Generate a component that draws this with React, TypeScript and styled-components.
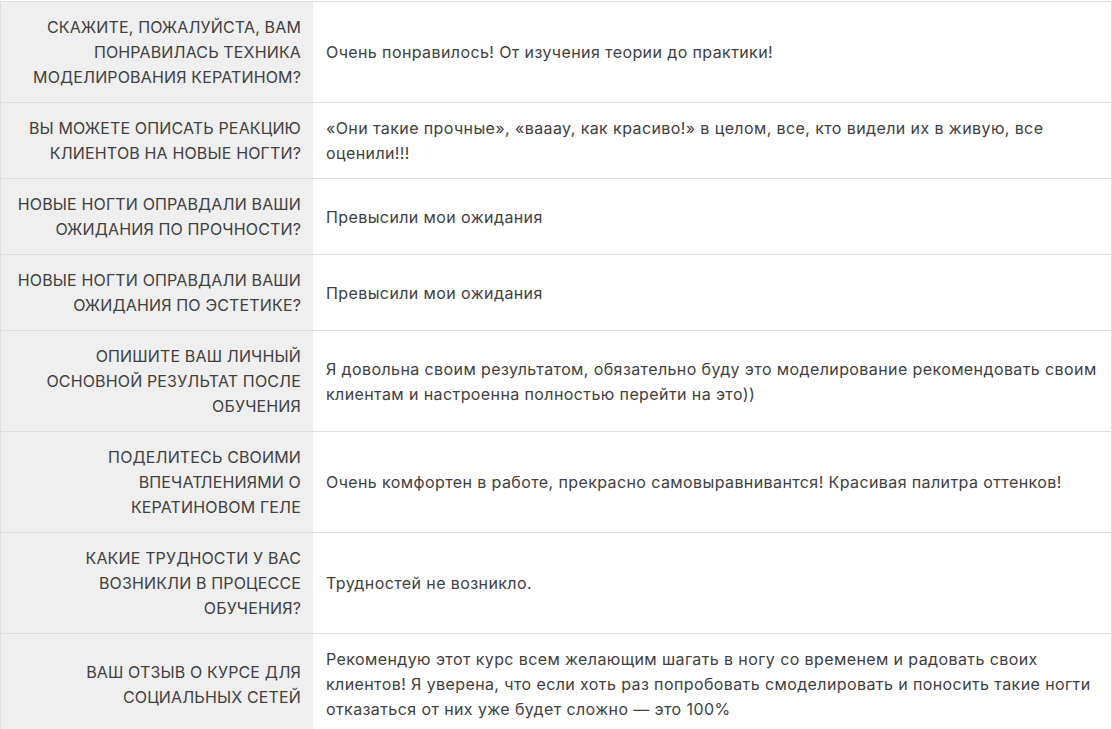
import styled, { createGlobalStyle } from "styled-components";

const GlobalStyle = createGlobalStyle`
  body {
    margin: 0;
    padding-top: 1px;
    background: #fff;
    font-family: Inter, "Noto Sans", sans-serif;
    color: #404040;
  }
`;

const rows: { q: string; a: string }[] = [
  {
    q: "Скажите, пожалуйста, вам понравилась техника моделирования кератином?",
    a: "Очень понравилось! От изучения теории до практики!",
  },
  {
    q: "Вы можете описать реакцию клиентов на новые ногти?",
    a: "«Они такие прочные», «вааау, как красиво!» в целом, все, кто видели их в живую, все оценили!!!",
  },
  {
    q: "Новые ногти оправдали ваши ожидания по прочности?",
    a: "Превысили мои ожидания",
  },
  {
    q: "Новые ногти оправдали ваши ожидания по эстетике?",
    a: "Превысили мои ожидания",
  },
  {
    q: "Опишите ваш личный основной результат после обучения",
    a: "Я довольна своим результатом, обязательно буду это моделирование рекомендовать своим клиентам и настроенна полностью перейти на это))",
  },
  {
    q: "Поделитесь своими впечатлениями о кератиновом геле",
    a: "Очень комфортен в работе, прекрасно самовыравнивантся! Красивая палитра оттенков!",
  },
  {
    q: "Какие трудности у вас возникли в процессе обучения?",
    a: "Трудностей не возникло.",
  },
  {
    q: "Ваш отзыв о курсе для социальных сетей",
    a: "Рекомендую этот курс всем желающим шагать в ногу со временем и радовать своих клиентов! Я уверена, что если хоть раз попробовать смоделировать и поносить такие ногти отказаться от них уже будет сложно — это 100%",
  },
];

export default function App() {
  return (
    <>
      <GlobalStyle />
      <Table>
        <tbody>
          {rows.map((r, i) => (
            <Row key={i}>
              <Question>{r.q}</Question>
              <Answer>{r.a}</Answer>
            </Row>
          ))}
        </tbody>
      </Table>
    </>
  );
}

const Table = styled.table`
  width: 1112px;
  border-collapse: collapse;
  table-layout: fixed;
  font-size: 16px;
  line-height: 25px;
`;

const Row = styled.tr`
  border: 1px solid #dedede;
`;

const Question = styled.td`
  width: 287px;
  padding: 13px 12px 12px 13px;
  background: #efefef;
  text-align: right;
  text-transform: uppercase;
  vertical-align: middle;
  letter-spacing: 0.15px;
`;

const Answer = styled.td`
  padding: 13px 6px 12px 13px;
  vertical-align: middle;
  text-align: left;
  letter-spacing: 0.4px;
`;
